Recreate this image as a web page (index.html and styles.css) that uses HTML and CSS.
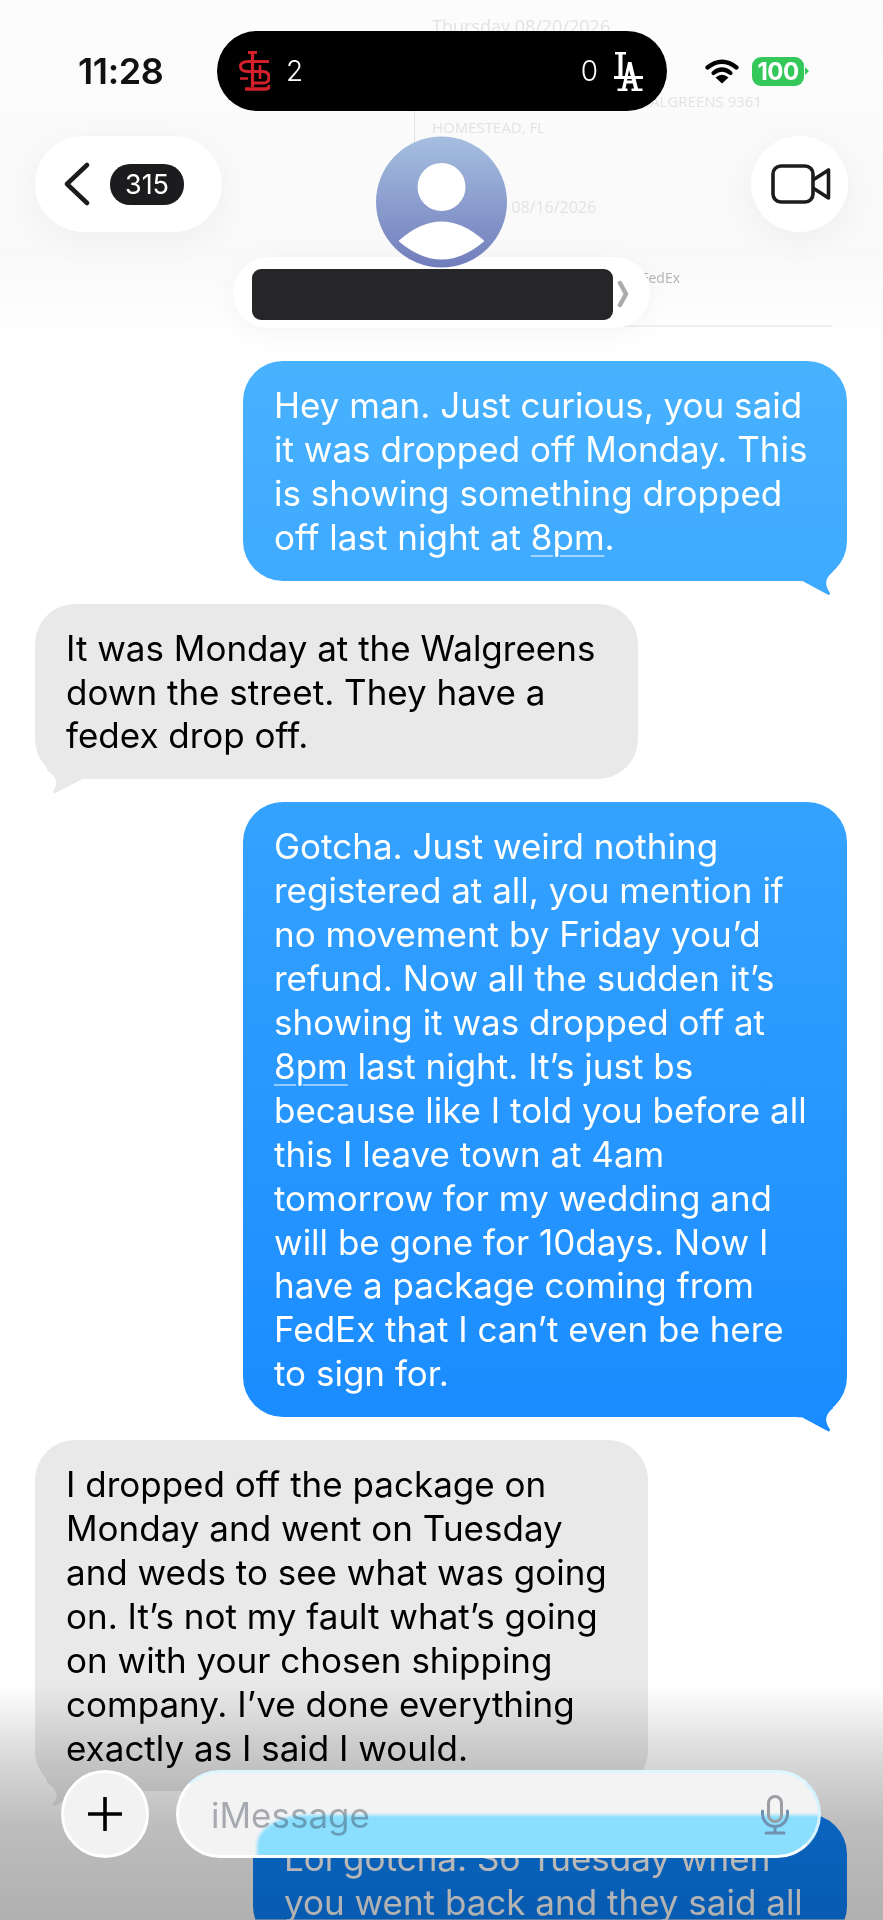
FILE: index.html
```html
<!DOCTYPE html>
<html lang="en">
<head>
    <meta charset="UTF-8">
    <meta name="viewport" content="width=device-width, initial-scale=1.0">
    <title>Messages</title>
    <link rel="stylesheet" href="styles.css">
</head>
<body>
    <div class="page">
        <!-- Conversation -->
        <div class="thread">
            <div class="bubble sent wide">Hey man. Just curious, you said<br>it was dropped off Monday. This<br>is showing something dropped<br>off last night at <u>8pm</u>.</div>
            <div class="bubble received">It was Monday at the Walgreens<br>down the street. They have a<br>fedex drop off.</div>
            <div class="bubble sent wide">Gotcha. Just weird nothing<br>registered at all, you mention if<br>no movement by Friday you’d<br>refund. Now all the sudden it’s<br>showing it was dropped off at<br><u>8pm</u> last night. It’s just bs<br>because like I told you before all<br>this I leave town at 4am<br>tomorrow for my wedding and<br>will be gone for 10days. Now I<br>have a package coming from<br>FedEx that I can’t even be here<br>to sign for.</div>
            <div class="bubble received long">I dropped off the package on<br>Monday and went on Tuesday<br>and weds to see what was going<br>on. It’s not my fault what’s going<br>on with your chosen shipping<br>company. I’ve done everything<br>exactly as I said I would.</div>
            <div class="bubble sent narrow">Lol gotcha. So Tuesday when<br>you went back and they said all</div>
        </div>

        <!-- Top bar -->
        <div class="top">
            <div class="ghost">
                <div class="ghost-date">Thursday 08/20/2026</div>
                <div class="ghost-store">WALGREENS 9361</div>
                <div class="ghost-city">HOMESTEAD, FL</div>
                <div class="ghost-date2">Sunday 08/16/2026</div>
                <div class="ghost-carrier">FedEx</div>
                <div class="ghost-rule"></div>
            </div>

            <div class="status">
                <div class="time">11:28</div>
                <div class="island">
                    <svg class="logo" width="31" height="41" viewBox="0 0 31 41" fill="none" stroke="#d3202c">
                        <path d="M9 1.500h9M13.500 1.500V36" stroke-width="3.200"/>
                        <path d="M30 10.500H9Q1.500 10.500 1.500 15.500T9 20.500H23Q30 20.500 30 26.500T23 32H13" stroke-width="3"/>
                        <path d="M1 27.500H9M21 14V28" stroke-width="2.600"/>
                        <path d="M6 38H26Q30.500 38 30.500 34" stroke-width="3.600"/>
                    </svg>
                    <span class="score">2</span>
                    <span class="score score-right">0</span>
                    <svg class="logo" width="31" height="41" viewBox="0 0 31 41" fill="#fff">
                        <path d="M1 1h11v2.500H8.500V25H29V28H0V25H4.500V3.500H1Z"/>
                        <path d="M14 11h3.500L24 37.500H28.500V40H17.500V37.500H20L18.800 32.500H12.500L11.500 37.500H13.500V40H3.500V37.500H8L14 11ZM15 19L13 29.500H18Z"/>
                    </svg>
                </div>
                <div class="status-icons">
                    <svg width="34" height="26" viewBox="0 0 34 26" fill="none" stroke="#000" stroke-width="4.200" stroke-linecap="round">
                        <path d="M2.500 9.500Q17 -2 31.500 9.500"/>
                        <path d="M8.500 15Q17 8 25.500 15"/>
                        <path d="M17 25.500L10.500 19.500Q17 14 23.500 19.500Z" fill="#000" stroke="none"/>
                    </svg>
                    <div class="battery">100</div>
                </div>
            </div>

            <div class="nav">
                <div class="back">
                    <svg width="26" height="44" viewBox="0 0 26 44" fill="none" stroke="#1c1c1e" stroke-width="4.500" stroke-linecap="round" stroke-linejoin="round">
                        <path d="M23 3L3 22L23 41"/>
                    </svg>
                    <span class="badge">315</span>
                </div>
                <div class="contact">
                    <svg class="avatar" width="131" height="132" viewBox="0 0 131 132">
                        <defs>
                            <linearGradient id="avatarFill" x1="0" y1="0" x2="0" y2="1">
                                <stop offset="0" stop-color="#a6bfe0"/>
                                <stop offset="1" stop-color="#717dbc"/>
                            </linearGradient>
                        </defs>
                        <circle cx="65.500" cy="66" r="65.500" fill="url(#avatarFill)"/>
                        <circle cx="65.500" cy="51" r="24" fill="#fff"/>
                        <path d="M24 105Q65.500 68 107 105Q65.500 140 24 105Z" fill="#fff" stroke="#fff" stroke-width="2" stroke-linejoin="round"/>
                    </svg>
                    <div class="name-pill">
                        <div class="redaction"></div>
                        <svg width="12" height="28" viewBox="0 0 12 28" fill="none" stroke="#ababab" stroke-width="4.500" stroke-linecap="round" stroke-linejoin="round">
                            <path d="M3 3L9 14L3 25"/>
                        </svg>
                    </div>
                </div>
                <div class="video">
                    <svg width="60" height="40" viewBox="0 0 60 40" fill="none" stroke="#1c1c1e" stroke-width="3.600" stroke-linejoin="round">
                        <rect x="2" y="2" width="40" height="36" rx="8"/>
                        <path d="M42 16L57.500 6V34L42 24"/>
                    </svg>
                </div>
            </div>
        </div>

        <div class="fade"></div>

        <!-- Composer -->
        <div class="composer">
            <div class="add">
                <svg width="34" height="34" viewBox="0 0 34 34" fill="none" stroke="#000" stroke-width="3.600" stroke-linecap="round">
                    <path d="M17 1V33M1 17H33"/>
                </svg>
            </div>
            <div class="field">
                <div class="field-glow"></div>
                <span class="placeholder">iMessage</span>
                <svg class="mic" width="28" height="40" viewBox="0 0 28 40" fill="none" stroke-width="3" stroke-linecap="round">
                    <rect x="7.500" y="1.500" width="13" height="25" rx="6.500" stroke="#9a9ea3"/>
                    <path d="M1.500 16V19A12.500 12.500 0 0 0 26.500 19V16M14 32V38M5 38H23" stroke="#6f93b3"/>
                </svg>
            </div>
        </div>
    </div>
</body>
</html>
```

FILE: styles.css
```css
* {
    box-sizing: border-box;
}

body {
    margin: 0;
    font-family: 'Inter', 'Noto Sans', sans-serif;
    background-color: #ffffff;
}

.page {
    position: relative;
    height: 1920px;
    overflow: hidden;
}

/* Thread */
.thread {
    display: flex;
    flex-direction: column;
    gap: 23px;
    padding: 361px 36px 0 35px;
}

.bubble {
    position: relative;
    padding: 23px 31px 21px;
    border-radius: 40px;
    font-size: 35px;
    line-height: 43.9px;
    letter-spacing: 0;
}

.bubble u {
    text-decoration-thickness: 2px;
    text-underline-offset: 5px;
    text-decoration-color: rgba(255, 255, 255, 0.5);
}

.sent {
    align-self: flex-end;
    color: #ffffff;
    background: linear-gradient(to bottom, #48b2ff 361px, #1a8cff 1417px, #0a84ff 1920px) fixed;
}

.sent::after {
    content: "";
    position: absolute;
    right: 0;
    bottom: -16px;
    width: 50px;
    height: 30px;
    background: inherit;
    clip-path: path("M0 14L5 14L31 28Q33 29 33 26C29 20 26 13 36 5L36 0L0 0Z");
}

.wide {
    width: 604px;
}

.narrow {
    width: 594px;
}

.received {
    align-self: flex-start;
    width: 603px;
    color: #000000;
    background-color: #e9e9e9;
}

.received::after {
    content: "";
    position: absolute;
    left: 0;
    bottom: -16px;
    width: 50px;
    height: 30px;
    background: inherit;
    clip-path: path("M47 14L20 28Q18 29 18 26C23 20 24 13 12 5L12 0L47 0Z");
}

.long {
    width: 613px;
}

/* Top bar */
.top {
    position: absolute;
    top: 0;
    left: 0;
    right: 0;
    height: 340px;
    padding-top: 31px;
    background: linear-gradient(to bottom, #fcfcfc 0, #f9f9f9 75%, #ffffff 100%);
}

.ghost {
    position: absolute;
    top: 16px;
    left: 414px;
    width: 418px;
    padding-left: 18px;
    font-family: 'Open Sans', sans-serif;
    font-size: 15px;
    line-height: 20px;
    color: #e3e3e3;
}

.ghost::before {
    content: "";
    position: absolute;
    top: 90px;
    left: 0;
    height: 50px;
    border-left: 1px solid #e4e4e4;
}

.ghost-date {
    font-size: 18px;
}

.ghost-store {
    margin-top: 55px;
    padding-right: 70px;
    text-align: right;
}

.ghost-city {
    margin-top: 6px;
}

.ghost-date2 {
    margin-top: 60px;
    padding-left: 20px;
    font-size: 16px;
}

.ghost-carrier {
    margin-top: 51px;
    padding-right: 152px;
    text-align: right;
    font-size: 14px;
    color: #b4b4b4;
}

.ghost-rule {
    margin: 37px 0 0 188px;
    border-top: 2px solid #f0f0f0;
}

.status {
    position: relative;
    display: grid;
    grid-template-columns: 217px 450px 1fr;
    align-items: center;
    height: 80px;
}

.time {
    padding-left: 78px;
    font-size: 36px;
    font-weight: 600;
    letter-spacing: -0.4px;
    color: #111111;
}

.island {
    display: flex;
    align-items: center;
    gap: 16px;
    height: 80px;
    padding: 0 22px;
    border-radius: 40px;
    background-color: #000000;
}

.score {
    font-size: 28px;
    font-weight: 300;
    color: #ffffff;
}

.score-right {
    margin-left: auto;
}

.status-icons {
    display: flex;
    align-items: center;
    gap: 13px;
    padding-left: 38px;
}

.battery {
    position: relative;
    width: 52px;
    height: 29px;
    border-radius: 9px;
    background-color: #34c759;
    color: #ffffff;
    font-size: 24px;
    font-weight: 700;
    line-height: 29px;
    letter-spacing: -0.5px;
    text-align: center;
}

.battery::after {
    content: "";
    position: absolute;
    top: 10px;
    right: -5px;
    border-left: 4px solid #34c759;
    border-top: 4px solid transparent;
    border-bottom: 4px solid transparent;
}

.nav {
    position: relative;
    display: grid;
    grid-template-columns: 1fr auto 1fr;
    align-items: start;
    margin-top: 25px;
    padding: 0 35px;
}

.back {
    display: flex;
    align-items: center;
    gap: 20px;
    justify-self: start;
    width: 187px;
    height: 96px;
    padding-left: 29px;
    border-radius: 48px;
    background-color: #ffffff;
    box-shadow: 0 6px 36px rgba(0, 0, 0, 0.05);
}

.badge {
    width: 74px;
    height: 41px;
    border-radius: 20px;
    background-color: #1c1c1e;
    color: #ffffff;
    font-size: 27px;
    line-height: 41px;
    text-align: center;
}

.contact {
    display: flex;
    flex-direction: column;
    align-items: center;
}

.avatar {
    position: relative;
    z-index: 1;
    display: block;
}

.name-pill {
    display: flex;
    align-items: center;
    gap: 4px;
    width: 417px;
    height: 71px;
    margin-top: -11px;
    padding: 3px 0 0 19px;
    border-radius: 36px;
    background-color: #ffffff;
    box-shadow: 0 6px 30px rgba(0, 0, 0, 0.04);
}

.redaction {
    width: 361px;
    height: 51px;
    border-radius: 9px;
    background-color: #262628;
}

.video {
    display: flex;
    align-items: center;
    justify-content: center;
    justify-self: end;
    width: 97px;
    height: 96px;
    padding-left: 3px;
    border-radius: 50%;
    background-color: #ffffff;
    box-shadow: 0 6px 36px rgba(0, 0, 0, 0.05);
}

/* Bottom */
.fade {
    position: absolute;
    left: 0;
    right: 0;
    bottom: 0;
    height: 235px;
    mix-blend-mode: multiply;
    background: linear-gradient(to bottom, #ffffff 0, #d8d8d8 32%, #bdbdbd 60%, #b0b0b0 100%);
}

.composer {
    position: absolute;
    left: 61px;
    right: 62px;
    top: 1770px;
    display: flex;
    gap: 27px;
}

.add {
    display: flex;
    align-items: center;
    justify-content: center;
    flex: none;
    width: 88px;
    height: 88px;
    border: 3px solid #ffffff;
    border-radius: 50%;
    background-color: #f2f2f2;
}

.field {
    position: relative;
    flex: 1;
    display: flex;
    align-items: center;
    justify-content: space-between;
    height: 88px;
    padding: 2px 29px 0 32px;
    overflow: hidden;
    border: 3px solid #ffffff;
    border-top-color: #def6ff;
    border-right-color: #d4f3ff;
    border-radius: 44px;
    background-color: #f3f3f3;
}

.field-glow {
    position: absolute;
    left: 78px;
    right: -6px;
    top: 42px;
    bottom: -6px;
    border-top-left-radius: 50px 30px;
    background-color: #8adfff;
    filter: blur(1.500px);
}

.placeholder {
    position: relative;
    font-size: 35px;
    color: rgba(50, 60, 75, 0.4);
}

.mic {
    position: relative;
}
```
